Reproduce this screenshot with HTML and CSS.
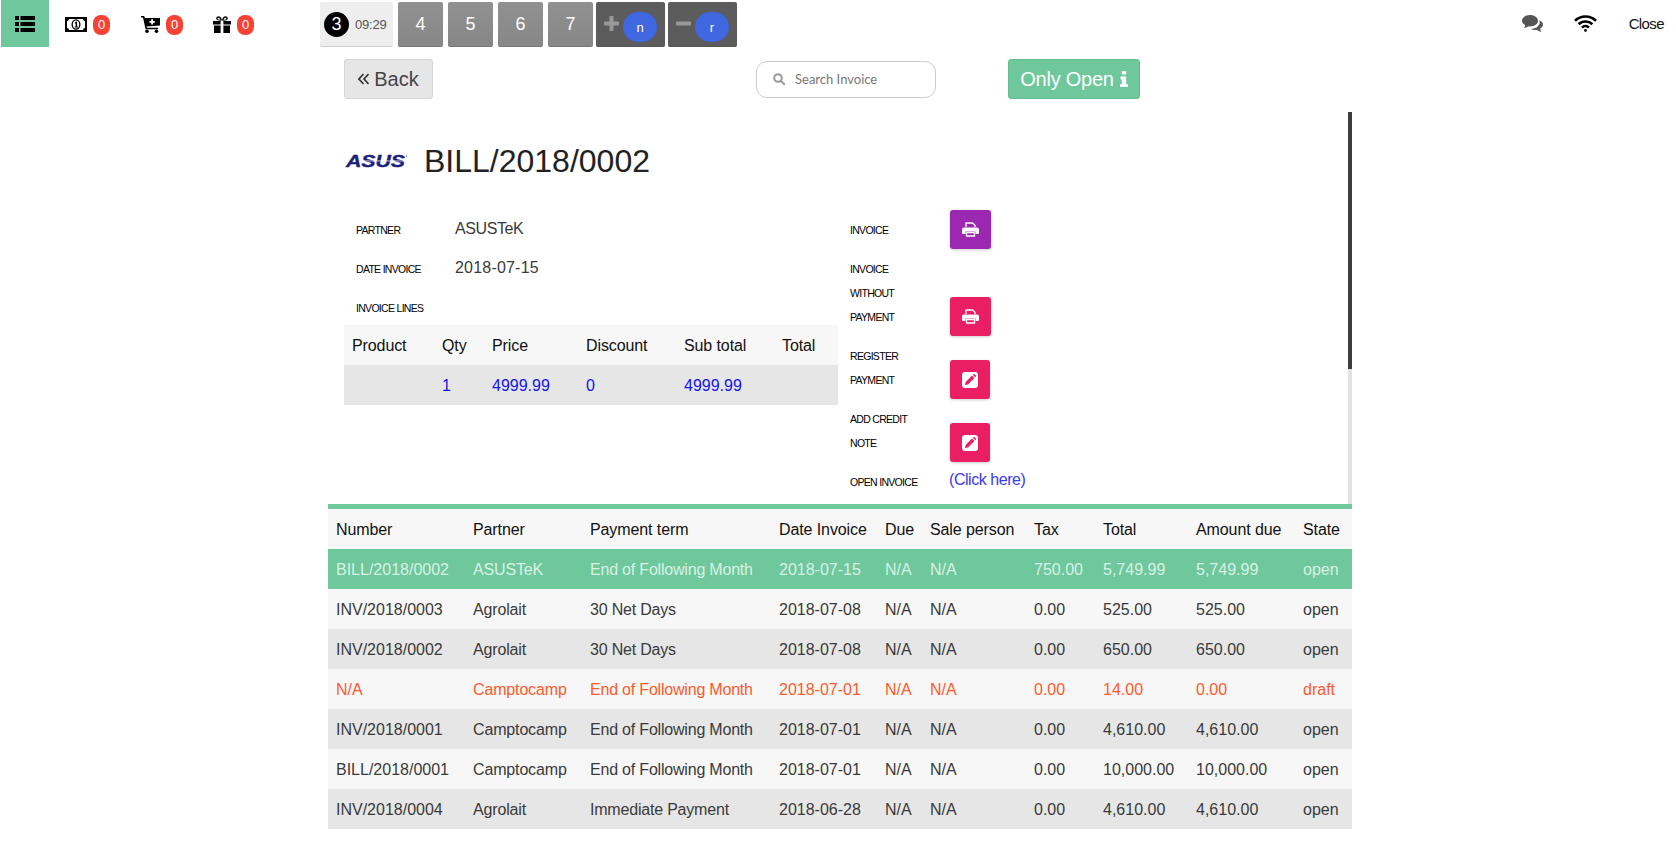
FILE: index.html
```html
<!DOCTYPE html>
<html lang="en">
<head>
    <meta charset="UTF-8">
    <meta name="viewport" content="width=device-width, initial-scale=1.0">
    <title>Invoices</title>
    <link rel="stylesheet" href="styles.css">
</head>
<body>
    <header class="topbar">
        <div class="menu-btn">
            <svg width="20" height="16" viewBox="0 0 20 16" fill="#000"><rect x="0" y="0" width="4" height="4"/><rect x="5.500" y="0" width="14.500" height="4"/><rect x="0" y="6" width="4" height="4"/><rect x="5.500" y="6" width="14.500" height="4"/><rect x="0" y="12" width="4" height="4"/><rect x="5.500" y="12" width="14.500" height="4"/></svg>
        </div>
        <div class="status status-money">
            <svg width="22" height="15" viewBox="0 0 22 15"><rect width="22" height="15" fill="#000"/><path d="M4 2h14a2 2 0 0 0 2 2v7a2 2 0 0 0-2 2H4a2 2 0 0 0-2-2V4a2 2 0 0 0 2-2z" fill="#fff"/><ellipse cx="11" cy="7.500" rx="4.500" ry="5.200" fill="#000"/><ellipse cx="11" cy="7.500" rx="3.200" ry="4" fill="#fff"/><path d="M9.600 5.800 11.200 4.600h.9v4.800h1v1.100H9.700V9.400h1V6.200l-.6.5z" fill="#000"/></svg>
            <span class="badge">0</span>
        </div>
        <div class="status status-cart">
            <svg width="19" height="17" viewBox="0 0 19 17"><path d="M0 0h3.200l.6 2H19v7.400L5.600 10.600l.3 1.200H17v1.500H4.600L2 1.500H0z" fill="#000"/><path d="M10.200 3.200h1.800v1.800h1.800v1.700h-1.800v1.800h-1.800V6.700H8.400V5h1.800z" fill="#fff"/><circle cx="6" cy="15.200" r="1.800" fill="#000"/><circle cx="15.500" cy="15.200" r="1.800" fill="#000"/></svg>
            <span class="badge">0</span>
        </div>
        <div class="status status-gift">
            <svg width="18" height="17" viewBox="0 0 18 17" fill="#000"><path d="M0 5h7.600v3.600H0zM10.400 5H18v3.600h-7.600zM1 9.600h6.600V17H1zM10.400 9.600H17V17h-6.600z"/><path d="M9 4.600C7 4.800 3.400 4.800 3.200 2.600 3.100.4 6-.3 7.400 1 8.200 1.700 8.700 2.800 9 4.600 9.300 2.800 9.800 1.700 10.600 1 12-.3 14.900.4 14.800 2.600 14.600 4.800 11 4.800 9 4.600zM7.400 3.700C7 2.700 6.300 1.700 5.300 1.800 4.400 1.900 4.400 3.300 5.300 3.500 5.900 3.700 6.700 3.700 7.400 3.700zM10.600 3.700C11.300 3.700 12.100 3.700 12.700 3.500 13.600 3.300 13.600 1.900 12.700 1.800 11.700 1.700 11 2.700 10.600 3.700z" fill-rule="evenodd"/></svg>
            <span class="badge">0</span>
        </div>

        <div class="tabs">
            <div class="tab tab-current"><span class="tab-num">3</span><span class="tab-time">09:29</span></div>
            <div class="tab">4</div>
            <div class="tab">5</div>
            <div class="tab">6</div>
            <div class="tab">7</div>
            <div class="tab tab-action tab-plus">
                <svg width="15" height="15" viewBox="0 0 15 15" fill="#999"><rect x="5.500" y="0" width="4" height="15" rx="1"/><rect x="0" y="5.500" width="15" height="4" rx="1"/></svg>
                <span class="key">n</span>
            </div>
            <div class="tab tab-action tab-minus">
                <svg width="15" height="15" viewBox="0 0 15 15" fill="#999"><rect x="0" y="5.500" width="15" height="4" rx="1"/></svg>
                <span class="key">r</span>
            </div>
        </div>

        <div class="topbar-right">
            <svg class="icon-comments" width="21" height="18" viewBox="0 0 21 18" fill="#555"><path d="M8 0c4.400 0 8 2.500 8 5.700s-3.600 5.700-8 5.700c-.7 0-1.300 0-1.900-.2C5 12.200 3.500 12.900 1.800 13c.8-.8 1.300-1.800 1.400-3C1.200 9 0 7.500 0 5.700 0 2.500 3.600 0 8 0z"/><path d="M17.300 5.200C19.500 6 21 7.600 21 9.500c0 1.700-1.100 3.100-2.900 4 .1 1.300.6 2.400 1.400 3.300-1.800-.1-3.400-.9-4.500-2-.6.100-1.200.2-1.900.2-1.600 0-3.100-.4-4.300-1 5.200-.1 9-3 9-6.900 0-.7-.2-1.300-.5-1.900z"/></svg>
            <svg class="icon-wifi" width="23" height="17" viewBox="0 0 23 17" fill="none" stroke="#000" stroke-width="2.600"><path d="M1 5.800a15 15 0 0 1 21 0"/><path d="M4.600 9.300a10 10 0 0 1 13.800 0"/><path d="M8 12.600a5 5 0 0 1 7 0"/><circle cx="11.500" cy="15.400" r=".7" fill="#000" stroke-width="1.400"/></svg>
            <span class="close-link">Close</span>
        </div>
    </header>

    <main class="content">
        <div class="toolbar">
            <button class="btn btn-back">
                <svg width="11" height="12" viewBox="0 0 11 12" fill="none" stroke="#333" stroke-width="1.700"><path d="M5.500 1 1 6l4.500 5M10.500 1 6 6l4.500 5"/></svg>
                Back
            </button>
            <div class="search">
                <svg width="12" height="12" viewBox="0 0 12 12" fill="none" stroke="#999" stroke-width="2"><circle cx="5" cy="5" r="3.800"/><path d="m8 8 3.300 3.300" stroke-linecap="round"/></svg>
                <span>Search Invoice</span>
            </div>
            <button class="btn btn-open">
                Only Open
                <svg width="8" height="16" viewBox="0 0 8 16" fill="#fff"><rect x="1.800" y="0" width="4.400" height="3.600" rx=".6"/><path d="M.5 5.600h5.700v7.600H8V16H0v-2.800h1.800V8.400H.5z"/></svg>
            </button>
        </div>

        <section class="invoice">
            <div class="scrollbar"><div class="scrollbar-thumb"></div></div>

            <div class="invoice-title">
                <svg class="logo" width="62" height="18" viewBox="0 0 62 18"><text x="0" y="14.500" textLength="59" lengthAdjust="spacingAndGlyphs">ASUS</text><rect x="14" y="8.600" width="46" height=".7" fill="#fff"/><circle cx="60.500" cy="4" r=".6" fill="#1b1f7a"/></svg>
                <h1>BILL/2018/0002</h1>
            </div>

            <div class="invoice-body">
                <div class="invoice-left">
                    <div class="field"><span class="label">Partner</span><span class="value value-name">ASUSTeK</span></div>
                    <div class="field"><span class="label">Date invoice</span><span class="value value-date">2018-07-15</span></div>
                    <div class="field field-lines"><span class="label">Invoice lines</span></div>
                    <table class="lines">
                        <thead>
                            <tr><th>Product</th><th>Qty</th><th>Price</th><th>Discount</th><th>Sub total</th><th>Total</th></tr>
                        </thead>
                        <tbody>
                            <tr><td></td><td>1</td><td>4999.99</td><td>0</td><td>4999.99</td><td></td></tr>
                        </tbody>
                    </table>
                </div>

                <div class="invoice-actions">
                    <div class="action">
                        <span class="label action-label">Invoice</span>
                        <span class="action-btn purple wide">
                            <svg width="17" height="15" viewBox="0 0 17 15"><path d="M4 5V1h6.500L13 3.300V5" fill="none" stroke="#fff" stroke-width="1.300"/><path d="M2 5.500h13a2 2 0 0 1 2 2V11a1 1 0 0 1-1 1h-2.500V9.500h-10V12H1a1 1 0 0 1-1-1V7.500a2 2 0 0 1 2-2z" fill="#fff"/><path d="M4.500 10.500h8V14h-8z" fill="none" stroke="#fff" stroke-width="1.300"/></svg>
                        </span>
                    </div>
                    <div class="action">
                        <span class="label action-label">Invoice<br>without<br>payment</span>
                        <span class="action-btn pink wide">
                            <svg width="17" height="15" viewBox="0 0 17 15"><path d="M4 5V1h6.500L13 3.300V5" fill="none" stroke="#fff" stroke-width="1.300"/><path d="M2 5.500h13a2 2 0 0 1 2 2V11a1 1 0 0 1-1 1h-2.500V9.500h-10V12H1a1 1 0 0 1-1-1V7.500a2 2 0 0 1 2-2z" fill="#fff"/><path d="M4.500 10.500h8V14h-8z" fill="none" stroke="#fff" stroke-width="1.300"/></svg>
                        </span>
                    </div>
                    <div class="action">
                        <span class="label action-label">Register<br>payment</span>
                        <span class="action-btn pink">
                            <svg width="16" height="16" viewBox="0 0 16 16"><rect width="16" height="16" rx="3" fill="#fff"/><path d="M3 13l.6-3L10 3.600l2.400 2.400L6 12.400z" fill="#e91e63"/><path d="M10.800 2.800l.7-.6a.8.8 0 0 1 1.100 0l1.300 1.300a.8.8 0 0 1 0 1.100l-.7.700z" fill="#e91e63"/></svg>
                        </span>
                    </div>
                    <div class="action">
                        <span class="label action-label">Add credit<br>note</span>
                        <span class="action-btn pink">
                            <svg width="16" height="16" viewBox="0 0 16 16"><rect width="16" height="16" rx="3" fill="#fff"/><path d="M3 13l.6-3L10 3.600l2.400 2.400L6 12.400z" fill="#e91e63"/><path d="M10.800 2.800l.7-.6a.8.8 0 0 1 1.100 0l1.300 1.300a.8.8 0 0 1 0 1.100l-.7.700z" fill="#e91e63"/></svg>
                        </span>
                    </div>
                    <div class="action action-open">
                        <span class="label action-label">Open invoice</span>
                        <a href="#" class="click-here">(Click here)</a>
                    </div>
                </div>
            </div>
        </section>

        <table class="invoices">
            <colgroup>
                <col class="c-number"><col class="c-partner"><col class="c-term"><col class="c-date"><col class="c-due"><col class="c-sale"><col class="c-tax"><col class="c-total"><col class="c-amount"><col class="c-state">
            </colgroup>
            <thead>
                <tr><th>Number</th><th>Partner</th><th>Payment term</th><th>Date Invoice</th><th>Due</th><th>Sale person</th><th>Tax</th><th>Total</th><th>Amount due</th><th>State</th></tr>
            </thead>
            <tbody>
                <tr class="selected"><td>BILL/2018/0002</td><td>ASUSTeK</td><td>End of Following Month</td><td>2018-07-15</td><td>N/A</td><td>N/A</td><td>750.00</td><td>5,749.99</td><td>5,749.99</td><td>open</td></tr>
                <tr><td>INV/2018/0003</td><td>Agrolait</td><td>30 Net Days</td><td>2018-07-08</td><td>N/A</td><td>N/A</td><td>0.00</td><td>525.00</td><td>525.00</td><td>open</td></tr>
                <tr><td>INV/2018/0002</td><td>Agrolait</td><td>30 Net Days</td><td>2018-07-08</td><td>N/A</td><td>N/A</td><td>0.00</td><td>650.00</td><td>650.00</td><td>open</td></tr>
                <tr class="draft"><td>N/A</td><td>Camptocamp</td><td>End of Following Month</td><td>2018-07-01</td><td>N/A</td><td>N/A</td><td>0.00</td><td>14.00</td><td>0.00</td><td>draft</td></tr>
                <tr><td>INV/2018/0001</td><td>Camptocamp</td><td>End of Following Month</td><td>2018-07-01</td><td>N/A</td><td>N/A</td><td>0.00</td><td>4,610.00</td><td>4,610.00</td><td>open</td></tr>
                <tr><td>BILL/2018/0001</td><td>Camptocamp</td><td>End of Following Month</td><td>2018-07-01</td><td>N/A</td><td>N/A</td><td>0.00</td><td>10,000.00</td><td>10,000.00</td><td>open</td></tr>
                <tr><td>INV/2018/0004</td><td>Agrolait</td><td>Immediate Payment</td><td>2018-06-28</td><td>N/A</td><td>N/A</td><td>0.00</td><td>4,610.00</td><td>4,610.00</td><td>open</td></tr>
            </tbody>
        </table>
    </main>
</body>
</html>
```

FILE: styles.css
```css
* {
    margin: 0;
    padding: 0;
    box-sizing: border-box;
}

body {
    background-color: #fff;
    font-family: 'Liberation Sans', Arial, sans-serif;
    font-size: 16px;
    color: #3a3a3a;
    height: 842px;
    overflow: hidden;
}

/* top bar */
.topbar {
    display: flex;
    height: 47px;
    padding-left: 1px;
    align-items: stretch;
}

.menu-btn {
    width: 48px;
    background-color: #6ec89b;
    display: flex;
    align-items: center;
    justify-content: center;
}

.status {
    display: flex;
    align-items: center;
    gap: 6px;
    height: 47px;
    padding-top: 2px;
}

.status-money {
    margin-left: 16px;
}

.status-cart {
    margin-left: 31px;
}

.status-gift {
    margin-left: 30px;
}

.badge {
    width: 17px;
    height: 20px;
    background-color: #f44336;
    border-radius: 8px;
    color: #fff;
    font-size: 13px;
    line-height: 20px;
    text-align: center;
}

.tabs {
    display: flex;
    margin-left: 66px;
    padding-top: 2px;
    gap: 5px;
}

.tab {
    width: 45px;
    background: linear-gradient(#919191, #878787);
    border-bottom: 1px solid #777;
    border-radius: 2px;
    color: #fff;
    font-size: 18px;
    display: flex;
    align-items: center;
    justify-content: center;
}

.tab-current {
    width: 73px;
    background: #eee;
    border-bottom: 1px solid #ccc;
    color: #555;
    justify-content: flex-start;
    padding-left: 4px;
    gap: 6px;
}

.tab-num {
    width: 25px;
    height: 25px;
    border-radius: 50%;
    background-color: #000;
    color: #fff;
    font-size: 18px;
    line-height: 25px;
    text-align: center;
}

.tab-time {
    font-size: 13px;
    letter-spacing: -0.2px;
}

.tab-action {
    width: 69px;
    background: #5c5c5c;
    border-bottom: 1px solid #555;
    justify-content: flex-start;
    padding-left: 8px;
    gap: 4px;
    align-items: flex-start;
}

.tab-plus {
    margin-left: -2px;
}

.tab-minus {
    margin-left: -2px;
}

.tab-action svg {
    margin-top: 14px;
}

.key {
    width: 34px;
    height: 30px;
    margin-top: 10px;
    border-radius: 15px;
    background-color: #3f67e0;
    color: #fff;
    font-size: 13px;
    line-height: 32px;
    text-align: center;
}

.topbar-right {
    margin-left: auto;
    display: flex;
    align-items: center;
    padding-bottom: 1px;
    padding-right: 12px;
}

.icon-comments {
    margin-top: 1px;
}

.icon-wifi {
    margin-left: 31px;
}

.close-link {
    margin-left: 32px;
    font-size: 15px;
    letter-spacing: -0.6px;
    color: #111;
}

/* main column */
.content {
    width: 1024px;
    margin-left: 328px;
}

.toolbar {
    display: flex;
    align-items: center;
    height: 40px;
    margin-top: 12px;
    padding-left: 16px;
}

.btn {
    height: 40px;
    border-radius: 3px;
    font-family: inherit;
    font-size: 20px;
    display: flex;
    align-items: center;
    justify-content: center;
}

.btn-back {
    width: 89px;
    gap: 5px;
    background-color: #e6e6e6;
    border: 1px solid #d5d5d5;
    color: #444;
}

.btn-open {
    width: 132px;
    gap: 6px;
    margin-left: 72px;
    background-color: #6ec89b;
    border: 1px solid #63bd90;
    color: #fff;
    letter-spacing: -0.25px;
}

.search {
    width: 180px;
    height: 37px;
    margin-left: 323px;
    padding-left: 16px;
    border: 1px solid #ccc;
    border-radius: 11px;
    font-family: Lato, sans-serif;
    font-size: 13px;
    color: #777;
    display: flex;
    align-items: center;
    gap: 10px;
}

/* invoice detail */
.invoice {
    position: relative;
    height: 392px;
    margin-top: 13px;
    padding-left: 16px;
}

.scrollbar {
    position: absolute;
    top: 0;
    right: 0;
    width: 4px;
    height: 100%;
    background-color: #e2e2e2;
}

.scrollbar-thumb {
    height: 257px;
    background-color: #3c3c3c;
}

.invoice-title {
    display: flex;
    align-items: center;
    height: 98px;
    padding-left: 2px;
}

.logo {
    margin-right: 16px;
    overflow: visible;
}

.logo text {
    font-family: 'Liberation Sans', Arial, sans-serif;
    font-weight: bold;
    font-style: italic;
    font-size: 17px;
    fill: #1b1f7a;
    stroke: #1b1f7a;
    stroke-width: 0.4px;
}

h1 {
    font-size: 32px;
    font-weight: normal;
    color: #222;
}

.invoice-body {
    display: flex;
}

.invoice-left {
    width: 494px;
}

.field {
    display: flex;
    align-items: center;
    height: 39px;
    padding-left: 12px;
    padding-bottom: 2px;
}

.field-lines {
    height: 37px;
    padding-bottom: 0;
}

.label {
    font-size: 10.5px;
    text-transform: uppercase;
    letter-spacing: -0.7px;
    color: #000;
    line-height: 24px;
}

.field .label {
    width: 99px;
    padding-top: 2px;
}

.value {
    color: #3a3a3a;
}

.value-name {
    letter-spacing: -0.4px;
}

.value-date {
    letter-spacing: 0.2px;
}

.lines {
    width: 494px;
    border-collapse: collapse;
    table-layout: fixed;
}

.lines th,
.lines td {
    height: 40px;
    padding-left: 8px;
    padding-top: 2px;
    text-align: left;
    font-weight: normal;
}

.lines th {
    background-color: #f7f7f7;
    color: #111;
    letter-spacing: -0.1px;
}

.lines td {
    background-color: #e6e6e6;
    color: #1414f0;
}

.lines th:nth-child(1) { width: 90px; }
.lines th:nth-child(2) { width: 50px; }
.lines th:nth-child(3) { width: 94px; }
.lines th:nth-child(4) { width: 98px; }
.lines th:nth-child(5) { width: 98px; }

.invoice-actions {
    margin-left: 12px;
}

.action {
    display: flex;
    align-items: flex-end;
    margin-bottom: 8px;
}

.action-label {
    display: block;
    width: 100px;
    padding-bottom: 7px;
}

.action-btn {
    width: 40px;
    height: 39px;
    border-radius: 3px;
    box-shadow: 0 1px 3px rgba(0, 0, 0, 0.2);
    display: flex;
    align-items: center;
    justify-content: center;
}

.wide {
    width: 41px;
}

.purple {
    background-color: #9c27b0;
}

.pink {
    background-color: #e91e63;
}

.action-open {
    align-items: center;
    margin-bottom: 0;
}

.action-open .action-label {
    padding-bottom: 0;
}

.click-here {
    color: #3a3aee;
    text-decoration: none;
    margin-top: -4px;
    margin-left: -1px;
    letter-spacing: -0.45px;
}

/* invoice list */
.invoices {
    width: 1024px;
    border-collapse: separate;
    border-spacing: 0;
    table-layout: fixed;
    border-top: 5px solid #6ec89b;
}

.invoices th,
.invoices td {
    height: 40px;
    padding-left: 8px;
    padding-top: 1px;
    text-align: left;
    font-weight: normal;
    white-space: nowrap;
}

.invoices th {
    color: #111;
    background-color: #f7f7f7;
    letter-spacing: -0.1px;
}

.invoices td:nth-child(2) {
    letter-spacing: -0.15px;
}

.invoices td:nth-child(3) {
    letter-spacing: -0.2px;
}

.invoices tbody tr:nth-child(even) td {
    background-color: #f7f7f7;
}

.invoices tbody tr:nth-child(odd) td {
    background-color: #e6e6e6;
}

.invoices tbody tr.selected td {
    background-color: #6ec89b;
    color: #d8f1e5;
}

.invoices tbody tr.draft td {
    color: #ff5a2c;
}

.c-number { width: 137px; }
.c-partner { width: 117px; }
.c-term { width: 189px; }
.c-date { width: 106px; }
.c-due { width: 45px; }
.c-sale { width: 104px; }
.c-tax { width: 69px; }
.c-total { width: 93px; }
.c-amount { width: 107px; }
.c-state { width: 57px; }
```
